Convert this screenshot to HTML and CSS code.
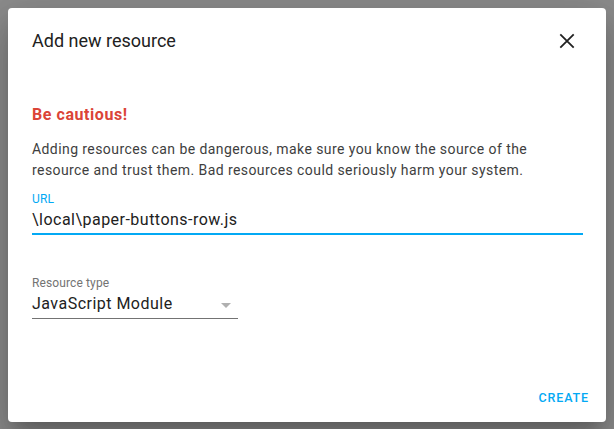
FILE: index.html
```html
<!DOCTYPE html>
<html>
<head>
<meta charset="utf-8">
<link rel="stylesheet" href="styles.css">
</head>
<body>
<div class="dialog">
  <div class="header">
    <div class="title">Add new resource</div>
    <button class="close" aria-label="Close">
      <svg width="24" height="24" viewBox="0 0 24 24"><path d="M5.3,5.3L18.7,18.7M18.7,5.3L5.3,18.7" stroke="#212121" stroke-width="1.8" fill="none"/></svg>
    </button>
  </div>
  <div class="content">
    <div class="warning">Be cautious!</div>
    <p class="desc">Adding resources can be dangerous, make sure you know the source of the resource and trust them. Bad resources could seriously harm your system.</p>
    <div class="field url">
      <div class="label">URL</div>
      <div class="value">\local\paper-buttons-row.js</div>
    </div>
    <div class="field select">
      <div class="label">Resource type</div>
      <div class="value">JavaScript Module<span class="arrow"></span></div>
    </div>
  </div>
  <div class="actions">
    <button class="btn">Create</button>
  </div>
</div>
</body>
</html>
```
FILE: styles.css
```css
html, body {
  margin: 0;
  padding: 0;
}
body {
  width: 614px;
  height: 429px;
  background: #8c8c8c;
  font-family: Roboto, "Noto Sans", sans-serif;
  overflow: hidden;
}
.dialog {
  box-sizing: border-box;
  margin: 8px 0 0 8px;
  width: 598px;
  height: 414px;
  background: #fff;
  border-radius: 4px;
  box-shadow: 0 11px 15px -7px rgba(0,0,0,.2), 0 24px 38px 3px rgba(0,0,0,.14), 0 9px 46px 8px rgba(0,0,0,.12);
  display: flex;
  flex-direction: column;
}
.header {
  display: flex;
  align-items: center;
  justify-content: space-between;
  padding: 16px 27px 0 24px;
  height: 32px;
}
.title {
  font-size: 18px;
  color: #212121;
  font-weight: 400;
}
.close {
  border: 0;
  background: none;
  padding: 0;
  width: 24px;
  height: 24px;
  display: flex;
  margin-top: 2px;
}
.content {
  padding: 0 24px;
  flex: 1;
}
.warning {
  margin-top: 49px;
  color: #db4437;
  font-weight: 700;
  font-size: 16px;
  letter-spacing: 0.035em;
}
.desc {
  margin: 15px 0 0;
  font-size: 14px;
  line-height: 21px;
  color: #3e3e3e;
  letter-spacing: 0.03em;
}
.field {
  display: flex;
  flex-direction: column;
}
.url {
  margin-top: 11px;
  border-bottom: 2px solid #03a9f4;
  width: 551px;
  padding-bottom: 1px;
}
.label {
  font-size: 12px;
  line-height: 14px;
  letter-spacing: 0.01em;
}
.url .label {
  color: #03a9f4;
}
.value {
  font-size: 16px;
  line-height: 24px;
  color: #212121;
  letter-spacing: 0.03em;
  margin-top: 2px;
}
.select {
  margin-top: 41px;
  width: 206px;
  border-bottom: 1px solid #737373;
}
.select .label {
  color: #737373;
}
.select .value {
  position: relative;
  padding-bottom: 2px;
}
.arrow {
  position: absolute;
  right: 7px;
  top: 11px;
  width: 0;
  height: 0;
  border-left: 5px solid transparent;
  border-right: 5px solid transparent;
  border-top: 5px solid #b0b0b0;
}
.actions {
  display: flex;
  justify-content: flex-end;
  padding: 0 9px 7px;
}
.btn {
  border: 0;
  background: none;
  font-family: Roboto, sans-serif;
  font-weight: 500;
  font-size: 12.5px;
  letter-spacing: 0.07em;
  text-transform: uppercase;
  color: #03a9f4;
  padding: 0 8px;
  height: 36px;
}
```
